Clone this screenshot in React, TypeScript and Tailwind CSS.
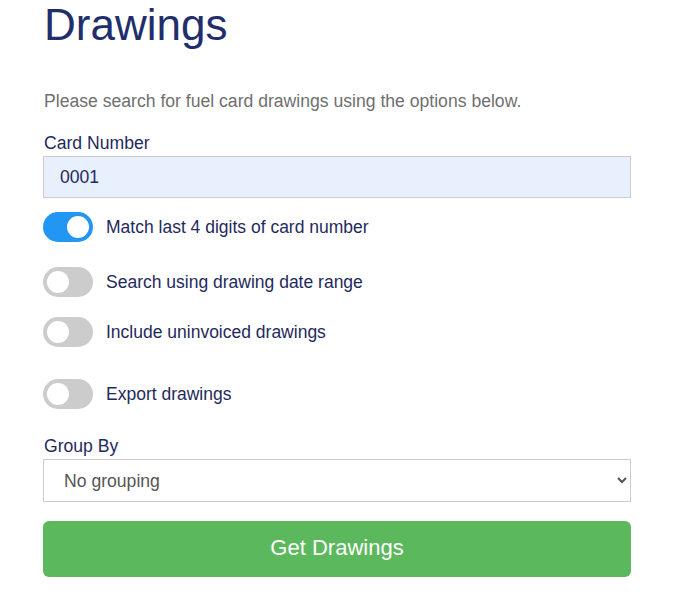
import React from 'react';

const font = { fontFamily: '"Liberation Sans", Arial, sans-serif' };

const Toggle = ({ on, label, className = '' }: { on?: boolean; label: string; className?: string }) => (
  <div className={`flex items-center gap-[13px] ${className}`}>
    <div
      className={`relative w-[50px] h-[30px] rounded-full shrink-0 ${on ? 'bg-[#2196f3]' : 'bg-[#cccccc]'}`}
    >
      <div
        className={`absolute top-[4px] w-[22px] h-[22px] rounded-full bg-white ${on ? 'left-[24px]' : 'left-[4px]'}`}
      />
    </div>
    <span className="text-[17.5px] leading-[26.4px] text-[#1f2a5c]">{label}</span>
  </div>
);

export default function App() {
  return (
    <div className="min-h-screen bg-white" style={font}>
      <div className="w-[588px] ml-[43px] flex flex-col">
        <h1 className="text-[44px] leading-[1.12] font-normal text-[#222e6c] pl-[1px]">Drawings</h1>
        <p className="mt-[39px] text-[17.6px] leading-[26.4px] text-[#6f6f6f] pl-[1px]">
          Please search for fuel card drawings using the options below.
        </p>
        <label className="mt-[15px] text-[17.6px] leading-[26.4px] text-[#1f2a5c] pl-[1px]">Card Number</label>
        <input
          readOnly
          value="0001"
          className="h-[42px] border border-[#cccccc] bg-[#e8f0fe] px-[16px] text-[17.6px] text-[#1f2a5c] outline-none"
          style={font}
        />
        <Toggle on label="Match last 4 digits of card number" className="mt-[14px]" />
        <Toggle label="Search using drawing date range" className="mt-[25px]" />
        <Toggle label="Include uninvoiced drawings" className="mt-[20px]" />
        <Toggle label="Export drawings" className="mt-[32px]" />
        <label className="mt-[24px] text-[17.6px] leading-[26.4px] text-[#1f2a5c] pl-[1px]">Group By</label>
        <select
          className="h-[43px] border border-[#cccccc] bg-white pl-[16px] pr-[8px] text-[17.6px] text-[#555555] outline-none"
          style={font}
          defaultValue="none"
        >
          <option value="none">No grouping</option>
        </select>
        <button
          className="mt-[19px] h-[56px] rounded-[6px] bg-[#5cb85c] text-white text-[22px] leading-[26px] pb-[3px]"
          style={font}
        >
          Get Drawings
        </button>
      </div>
    </div>
  );
}
